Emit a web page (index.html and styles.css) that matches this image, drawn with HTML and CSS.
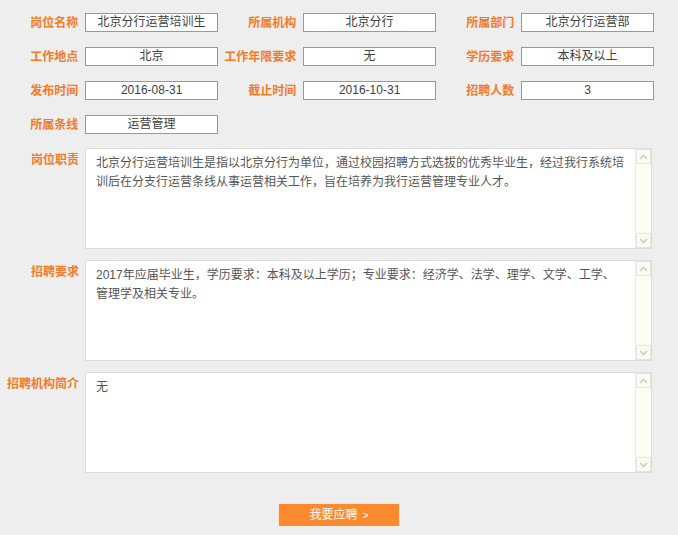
FILE: index.html
```html
<!DOCTYPE html>
<html lang="zh-CN">
<head>
<meta charset="utf-8">
<title>岗位详情</title>
<link rel="stylesheet" href="styles.css">
</head>
<body>
<div class="page">
  <div class="fields">
    <div class="field"><span class="label">岗位名称</span><span class="input">北京分行运营培训生</span></div>
    <div class="field"><span class="label">所属机构</span><span class="input">北京分行</span></div>
    <div class="field"><span class="label">所属部门</span><span class="input">北京分行运营部</span></div>

    <div class="field"><span class="label">工作地点</span><span class="input">北京</span></div>
    <div class="field"><span class="label">工作年限要求</span><span class="input">无</span></div>
    <div class="field"><span class="label">学历要求</span><span class="input">本科及以上</span></div>

    <div class="field"><span class="label">发布时间</span><span class="input">2016-08-31</span></div>
    <div class="field"><span class="label">截止时间</span><span class="input">2016-10-31</span></div>
    <div class="field"><span class="label">招聘人数</span><span class="input">3</span></div>

    <div class="field"><span class="label">所属条线</span><span class="input">运营管理</span></div>
  </div>

  <div class="areas">
    <div class="area-row">
      <span class="area-label">岗位职责</span>
      <div class="area">
        <div class="area-text">北京分行运营培训生是指以北京分行为单位，通过校园招聘方式选拔的优秀毕业生，经过我行系统培<br>训后在分支行运营条线从事运营相关工作，旨在培养为我行运营管理专业人才。</div>
        <div class="scrollbar">
          <span class="sb-btn"><svg width="9" height="6" viewBox="0 0 9 6"><path d="M1 5 L4.5 1.5 L8 5" fill="none" stroke="#c9c9c2" stroke-width="1.4"/></svg></span>
          <span class="sb-btn"><svg width="9" height="6" viewBox="0 0 9 6"><path d="M1 1 L4.5 4.5 L8 1" fill="none" stroke="#c9c9c2" stroke-width="1.4"/></svg></span>
        </div>
      </div>
    </div>
    <div class="area-row">
      <span class="area-label">招聘要求</span>
      <div class="area">
        <div class="area-text">2017年应届毕业生，学历要求：本科及以上学历；专业要求：经济学、法学、理学、文学、工学、<br>管理学及相关专业。</div>
        <div class="scrollbar">
          <span class="sb-btn"><svg width="9" height="6" viewBox="0 0 9 6"><path d="M1 5 L4.5 1.5 L8 5" fill="none" stroke="#c9c9c2" stroke-width="1.4"/></svg></span>
          <span class="sb-btn"><svg width="9" height="6" viewBox="0 0 9 6"><path d="M1 1 L4.5 4.5 L8 1" fill="none" stroke="#c9c9c2" stroke-width="1.4"/></svg></span>
        </div>
      </div>
    </div>
    <div class="area-row">
      <span class="area-label">招聘机构简介</span>
      <div class="area">
        <div class="area-text">无</div>
        <div class="scrollbar">
          <span class="sb-btn"><svg width="9" height="6" viewBox="0 0 9 6"><path d="M1 5 L4.5 1.5 L8 5" fill="none" stroke="#c9c9c2" stroke-width="1.4"/></svg></span>
          <span class="sb-btn"><svg width="9" height="6" viewBox="0 0 9 6"><path d="M1 1 L4.5 4.5 L8 1" fill="none" stroke="#c9c9c2" stroke-width="1.4"/></svg></span>
        </div>
      </div>
    </div>
  </div>

  <div class="actions">
    <button class="apply" type="button">我要应聘<span class="arrow">&gt;</span></button>
  </div>
</div>
</body>
</html>
```

FILE: styles.css
```css
html, body {
  margin: 0;
  padding: 0;
  background: #eeeeee;
}

body {
  font-family: "Liberation Sans", "Noto Sans CJK SC", sans-serif;
  font-size: 12px;
  color: #444;
}

.page {
  width: 678px;
  padding-top: 13px;
}

.fields {
  display: grid;
  grid-template-columns: repeat(3, 218px);
  grid-auto-rows: 19px;
  row-gap: 15px;
}

.field {
  display: flex;
  align-items: flex-start;
  height: 19px;
}

.label {
  width: 79px;
  margin-right: 7px;
  padding-top: 2px;
  line-height: 17px;
  text-align: right;
  color: #f27b27;
  font-weight: bold;
  white-space: nowrap;
}

.input {
  width: 134px;
  height: 19px;
  box-sizing: border-box;
  border: 1px solid #8d9ba8;
  background: #fff;
  text-align: center;
  line-height: 16px;
  color: #404040;
  white-space: nowrap;
}

.areas {
  margin-top: 14px;
  display: flex;
  flex-direction: column;
  row-gap: 11px;
}

.area-row {
  display: flex;
  align-items: flex-start;
  height: 101px;
}

.area-label {
  width: 79px;
  margin-right: 6px;
  padding-top: 4px;
  line-height: 17px;
  text-align: right;
  color: #f27b27;
  font-weight: bold;
  white-space: nowrap;
}

.area {
  width: 567px;
  height: 101px;
  box-sizing: border-box;
  border: 1px solid #dcdcdc;
  background: #fff;
  display: flex;
}

.area-text {
  flex: 1;
  padding: 5px 6px 0 10px;
  line-height: 19px;
  color: #555;
  white-space: nowrap;
  overflow: hidden;
}

.scrollbar {
  width: 16px;
  box-sizing: border-box;
  border-left: 1px solid #ededea;
  background: #fdfdf5;
  display: flex;
  flex-direction: column;
  justify-content: space-between;
}

.sb-btn {
  height: 15px;
  box-sizing: border-box;
  border: 1px solid #e6e6de;
  background: #fbfbf4;
  display: flex;
  align-items: center;
  justify-content: center;
}

.actions {
  margin-top: 31px;
  display: flex;
  justify-content: center;
}

.apply {
  width: 120px;
  height: 22px;
  border: 0;
  padding: 0;
  background: #fb8a2e;
  box-shadow: 0 0 0 1px #fbe4cf;
  color: #fff;
  font-family: "Liberation Sans", "Noto Sans CJK SC", sans-serif;
  font-size: 12px;
  line-height: 22px;
  cursor: pointer;
}

.arrow {
  margin-left: 5px;
  font-size: 10px;
}
```
